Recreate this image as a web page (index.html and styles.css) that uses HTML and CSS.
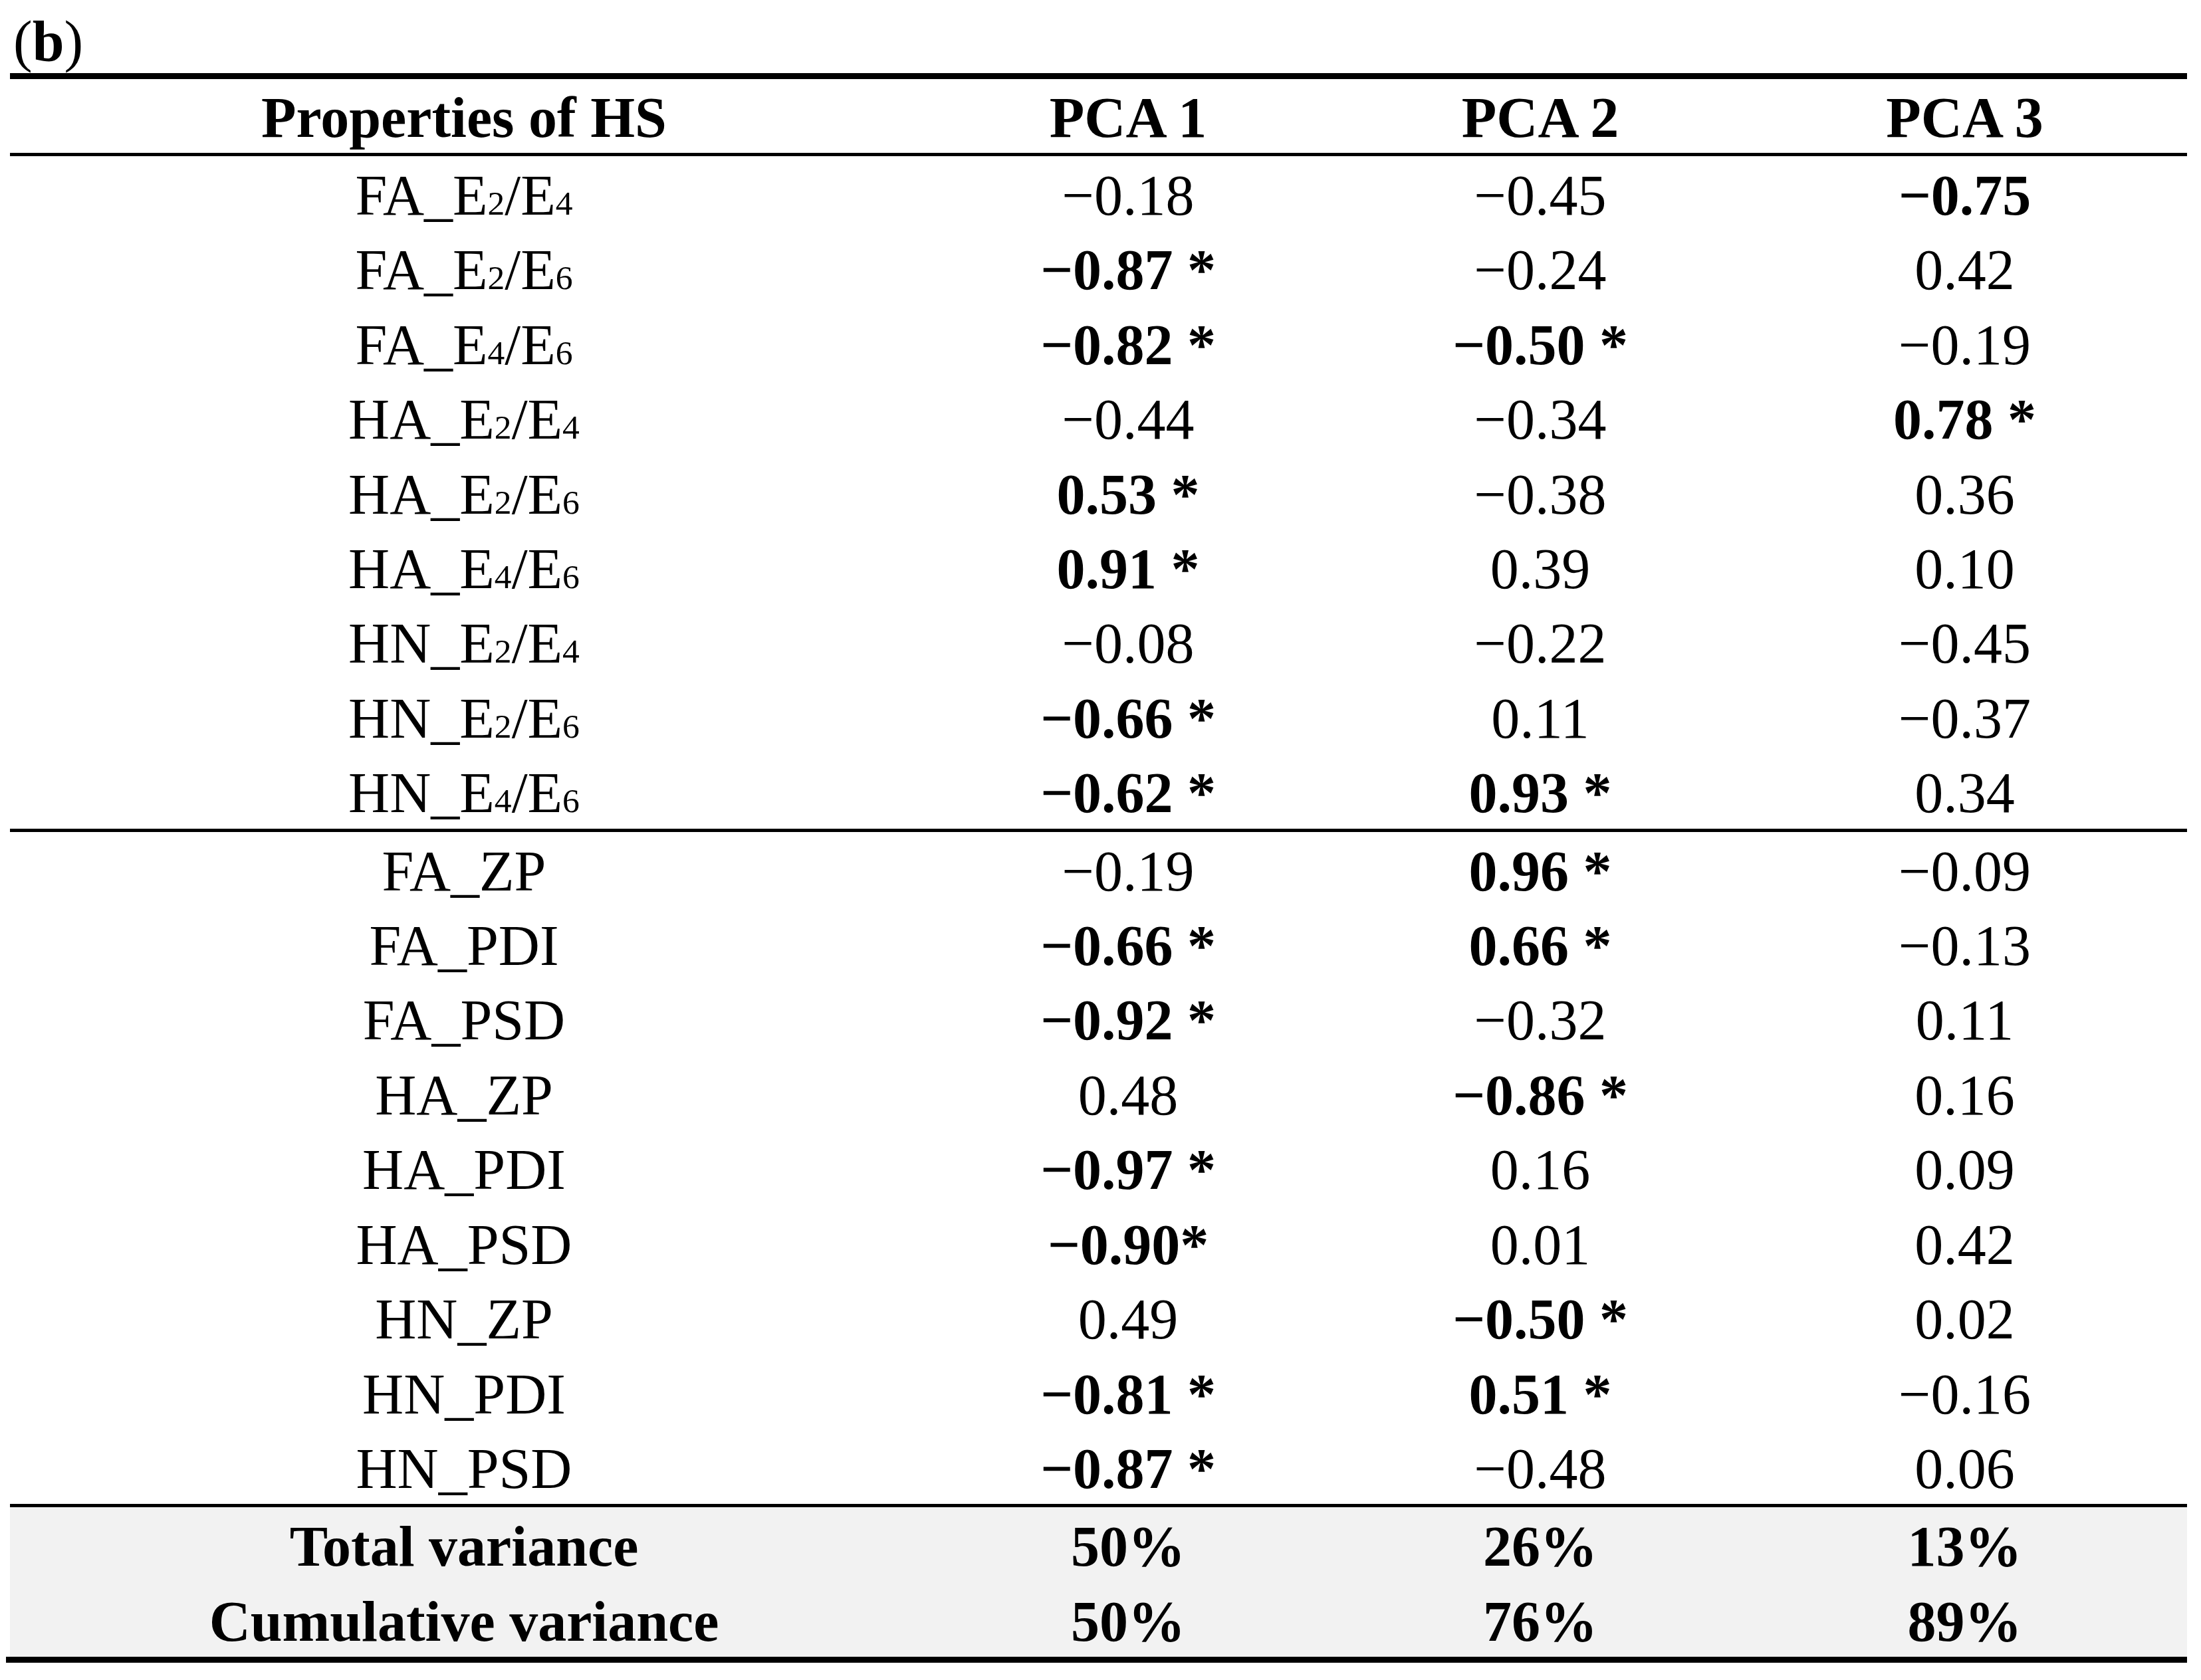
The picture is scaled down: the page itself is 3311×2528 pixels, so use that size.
FILE: index.html
```html
<!DOCTYPE html>
<html lang="en">
<head>
<meta charset="utf-8">
<title>PCA table (b)</title>
<link rel="stylesheet" href="styles.css">
</head>
<body>
<div class="page">
  <div class="label">(<b>b</b>)</div>
  <table class="pca">
    <colgroup>
      <col class="c1"><col class="c2"><col class="c3"><col class="c4">
    </colgroup>
    <thead>
      <tr><th>Properties of HS</th><th>PCA 1</th><th>PCA 2</th><th>PCA 3</th></tr>
    </thead>
    <tbody>
      <tr><td>FA_E<span class="sub">2</span>/E<span class="sub">4</span></td><td>−0.18</td><td>−0.45</td><td><b>−0.75</b></td></tr>
      <tr><td>FA_E<span class="sub">2</span>/E<span class="sub">6</span></td><td><b>−0.87 *</b></td><td>−0.24</td><td>0.42</td></tr>
      <tr><td>FA_E<span class="sub">4</span>/E<span class="sub">6</span></td><td><b>−0.82 *</b></td><td><b>−0.50 *</b></td><td>−0.19</td></tr>
      <tr><td>HA_E<span class="sub">2</span>/E<span class="sub">4</span></td><td>−0.44</td><td>−0.34</td><td><b>0.78 *</b></td></tr>
      <tr><td>HA_E<span class="sub">2</span>/E<span class="sub">6</span></td><td><b>0.53 *</b></td><td>−0.38</td><td>0.36</td></tr>
      <tr><td>HA_E<span class="sub">4</span>/E<span class="sub">6</span></td><td><b>0.91 *</b></td><td>0.39</td><td>0.10</td></tr>
      <tr><td>HN_E<span class="sub">2</span>/E<span class="sub">4</span></td><td>−0.08</td><td>−0.22</td><td>−0.45</td></tr>
      <tr><td>HN_E<span class="sub">2</span>/E<span class="sub">6</span></td><td><b>−0.66 *</b></td><td>0.11</td><td>−0.37</td></tr>
      <tr><td>HN_E<span class="sub">4</span>/E<span class="sub">6</span></td><td><b>−0.62 *</b></td><td><b>0.93 *</b></td><td>0.34</td></tr>
    </tbody>
    <tbody>
      <tr><td>FA_ZP</td><td>−0.19</td><td><b>0.96 *</b></td><td>−0.09</td></tr>
      <tr><td>FA_PDI</td><td><b>−0.66 *</b></td><td><b>0.66 *</b></td><td>−0.13</td></tr>
      <tr><td>FA_PSD</td><td><b>−0.92 *</b></td><td>−0.32</td><td>0.11</td></tr>
      <tr><td>HA_ZP</td><td>0.48</td><td><b>−0.86 *</b></td><td>0.16</td></tr>
      <tr><td>HA_PDI</td><td><b>−0.97 *</b></td><td>0.16</td><td>0.09</td></tr>
      <tr><td>HA_PSD</td><td><b>−0.90*</b></td><td>0.01</td><td>0.42</td></tr>
      <tr><td>HN_ZP</td><td>0.49</td><td><b>−0.50 *</b></td><td>0.02</td></tr>
      <tr><td>HN_PDI</td><td><b>−0.81 *</b></td><td><b>0.51 *</b></td><td>−0.16</td></tr>
      <tr><td>HN_PSD</td><td><b>−0.87 *</b></td><td>−0.48</td><td>0.06</td></tr>
    </tbody>
    <tfoot>
      <tr><th>Total variance</th><th>50%</th><th>26%</th><th>13%</th></tr>
      <tr><th>Cumulative variance</th><th>50%</th><th>76%</th><th>89%</th></tr>
    </tfoot>
  </table>
  <div class="bottom-rule"></div>
</div>
</body>
</html>
```

FILE: styles.css
```css
html, body {
  margin: 0;
  padding: 0;
  background: #ffffff;
}

body {
  font-family: "Liberation Serif", "Times New Roman", serif;
  font-size: 86px;
  color: #000000;
}

.page {
  padding-left: 15px;
  width: 3275px;
}

.label {
  height: 110px;
  box-sizing: border-box;
  display: flex;
  align-items: flex-end;
  padding-left: 5px;
  padding-bottom: 5px;
  line-height: 86px;
}

.label b {
  font-weight: bold;
}

.pca {
  width: 3275px;
  table-layout: fixed;
  border-collapse: separate;
  border-spacing: 0;
}

.c1 { width: 1366px; }
.c2 { width: 632px; }
.c3 { width: 608px; }
.c4 { width: 669px; }

.pca th,
.pca td {
  padding: 6px 0 0 0;
  line-height: 106.4px;
  text-align: center;
  white-space: nowrap;
  vertical-align: top;
}

.pca th {
  font-weight: bold;
}

.pca thead th {
  border-top: 9px solid #000;
  border-bottom: 5px solid #000;
  padding-top: 5px;
  line-height: 106px;
}

.pca tbody + tbody tr:first-child td {
  border-top: 5px solid #000;
}

.pca tfoot th {
  background: #f2f2f2;
}

.pca tfoot tr:first-child th {
  border-top: 5px solid #000;
}

.sub {
  font-size: 0.6em;
  line-height: 0;
}

.bottom-rule {
  height: 9px;
  background: #000;
  margin-left: -6px;
  width: 3281px;
}
```
